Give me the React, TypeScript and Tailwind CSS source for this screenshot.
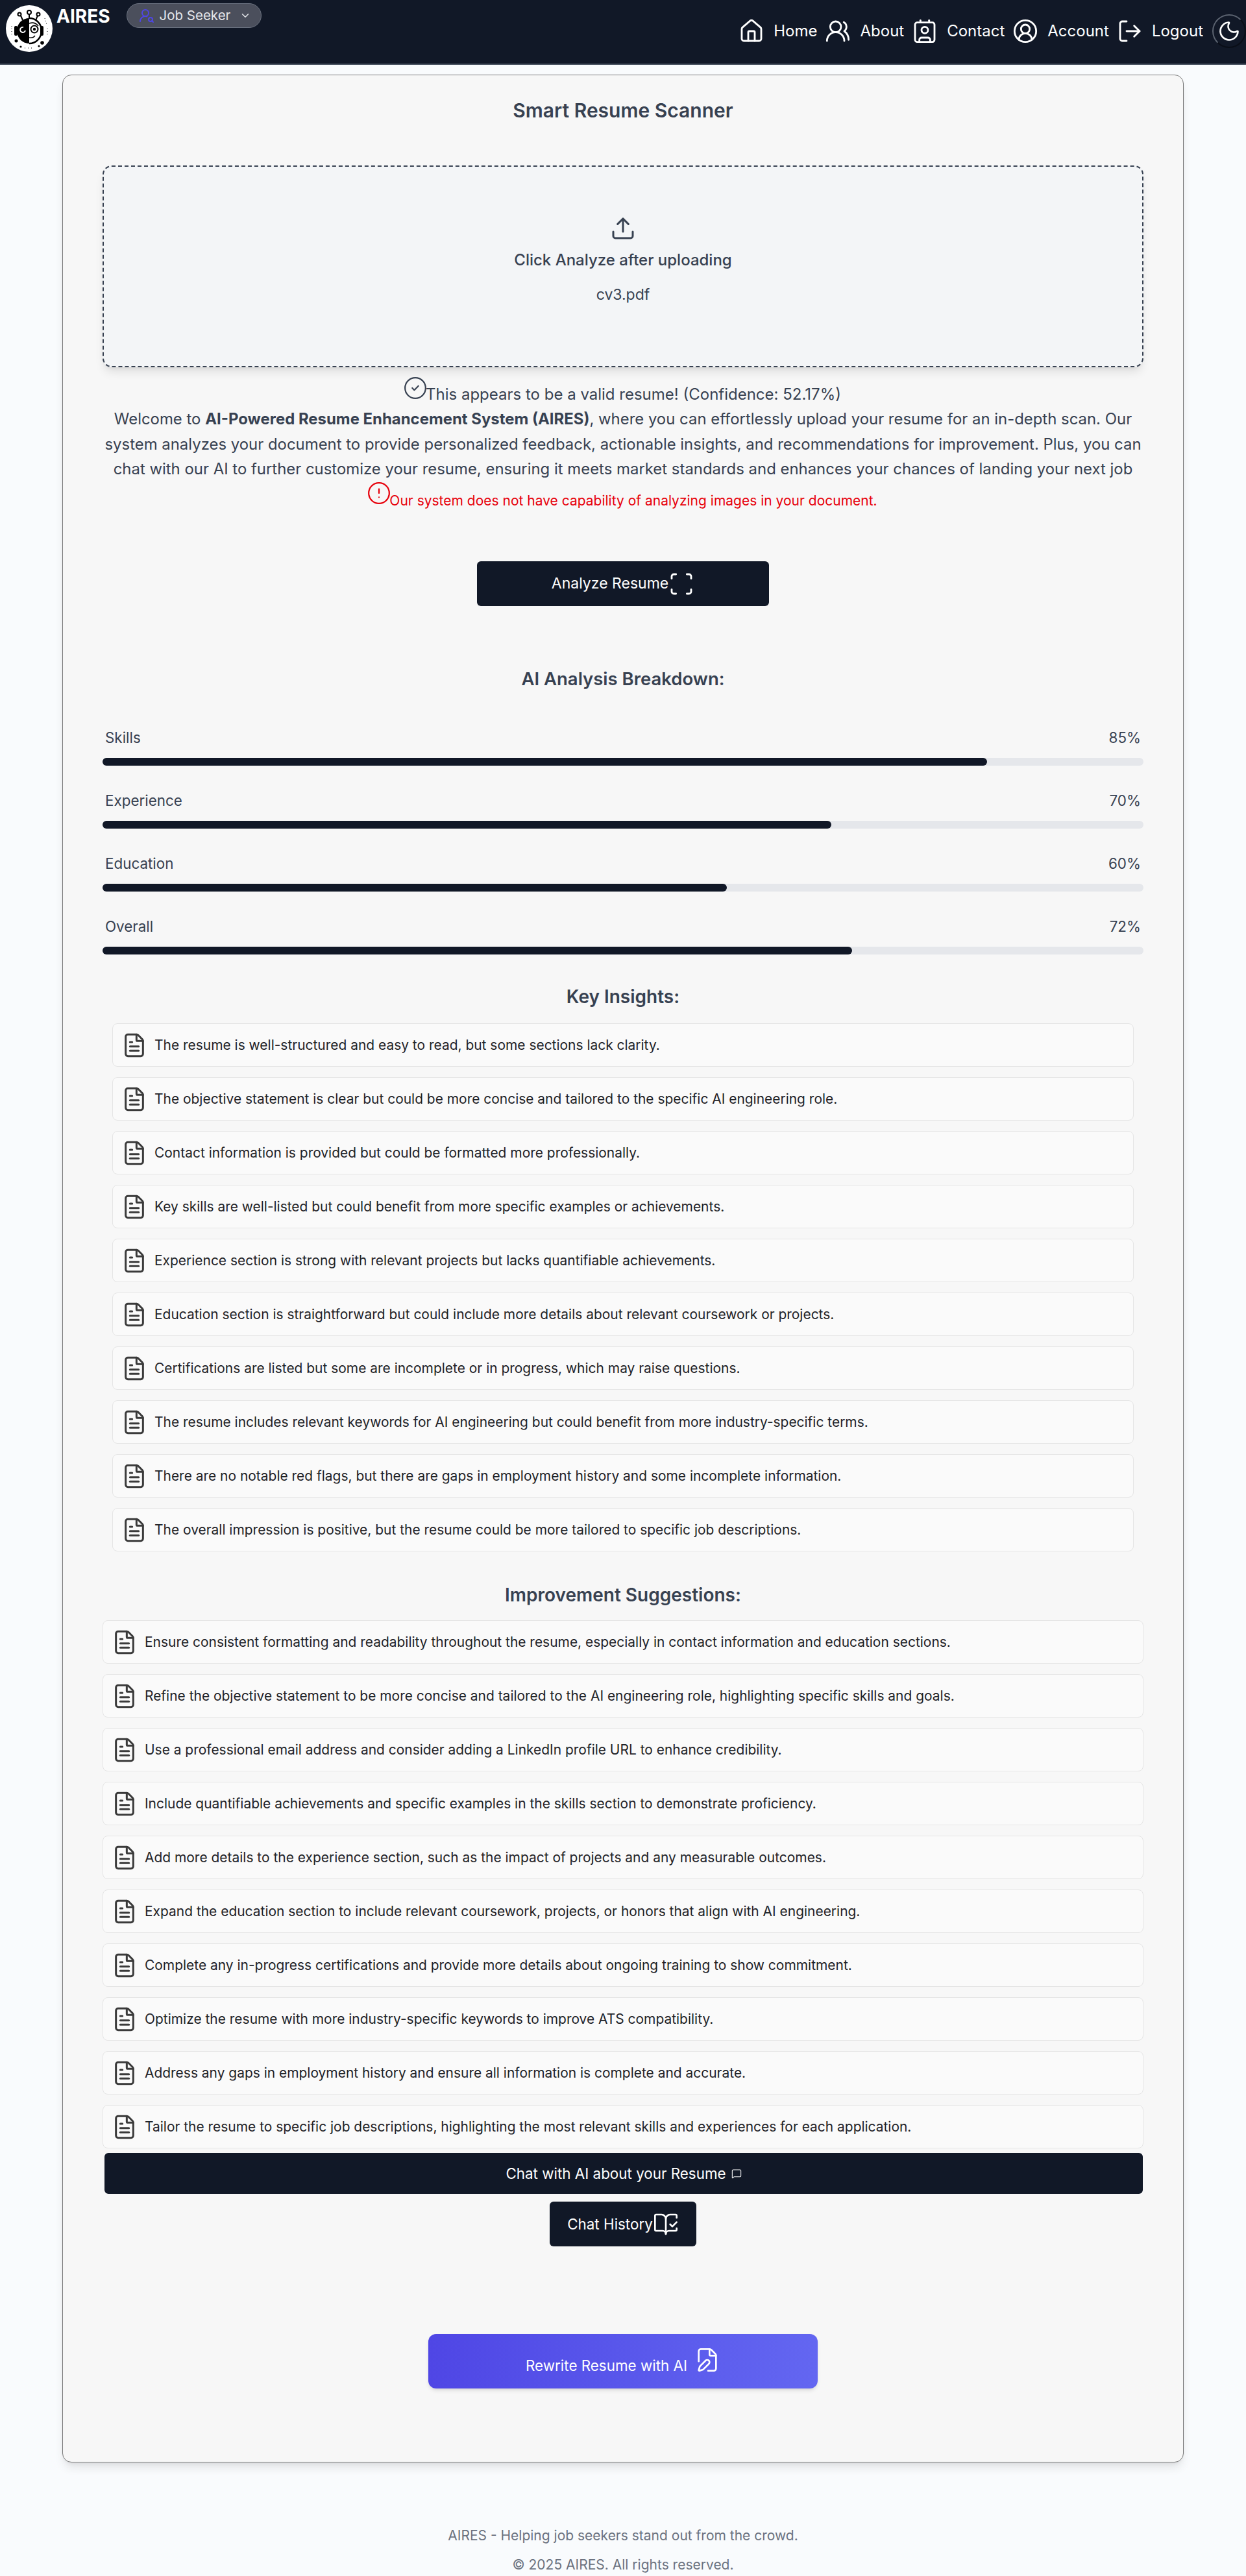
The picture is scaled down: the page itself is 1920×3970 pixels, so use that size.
import {
  BookOpenCheck,
  ChevronDown,
  CircleAlert,
  CircleCheck,
  CircleUserRound,
  Contact,
  FilePen,
  FileText,
  House,
  LogOut,
  MessageSquare,
  Moon,
  Scan,
  Upload,
  UserRoundSearch,
  UsersRound,
} from "lucide-react";

const scores = [
  { label: "Skills", value: 85 },
  { label: "Experience", value: 70 },
  { label: "Education", value: 60 },
  { label: "Overall", value: 72 },
];

const insights = [
  "The resume is well-structured and easy to read, but some sections lack clarity.",
  "The objective statement is clear but could be more concise and tailored to the specific AI engineering role.",
  "Contact information is provided but could be formatted more professionally.",
  "Key skills are well-listed but could benefit from more specific examples or achievements.",
  "Experience section is strong with relevant projects but lacks quantifiable achievements.",
  "Education section is straightforward but could include more details about relevant coursework or projects.",
  "Certifications are listed but some are incomplete or in progress, which may raise questions.",
  "The resume includes relevant keywords for AI engineering but could benefit from more industry-specific terms.",
  "There are no notable red flags, but there are gaps in employment history and some incomplete information.",
  "The overall impression is positive, but the resume could be more tailored to specific job descriptions.",
];

const suggestions = [
  "Ensure consistent formatting and readability throughout the resume, especially in contact information and education sections.",
  "Refine the objective statement to be more concise and tailored to the AI engineering role, highlighting specific skills and goals.",
  "Use a professional email address and consider adding a LinkedIn profile URL to enhance credibility.",
  "Include quantifiable achievements and specific examples in the skills section to demonstrate proficiency.",
  "Add more details to the experience section, such as the impact of projects and any measurable outcomes.",
  "Expand the education section to include relevant coursework, projects, or honors that align with AI engineering.",
  "Complete any in-progress certifications and provide more details about ongoing training to show commitment.",
  "Optimize the resume with more industry-specific keywords to improve ATS compatibility.",
  "Address any gaps in employment history and ensure all information is complete and accurate.",
  "Tailor the resume to specific job descriptions, highlighting the most relevant skills and experiences for each application.",
];

const navLinks = [
  { label: "Home", icon: House },
  { label: "About", icon: UsersRound },
  { label: "Contact", icon: Contact },
  { label: "Account", icon: CircleUserRound },
  { label: "Logout", icon: LogOut },
];

function Logo() {
  return (
    <svg viewBox="0 0 72 72" className="w-[72px] h-[72px] shrink-0">
      <circle cx="36" cy="36" r="36" fill="#fff" />
      {/* robot head, split black and white */}
      <path d="M36 20a19 19 0 0 0-19 19c0 11 8 20 19 20z" fill="#000" />
      <path d="M36 20a19 19 0 0 1 19 19c0 11-8 20-19 20" fill="#fff" stroke="#000" strokeWidth="2.5" />
      <path d="M36 20V11M26 23l-4-9M46 23l4-9" stroke="#000" strokeWidth="2" fill="none" />
      <circle cx="36" cy="11" r="3" fill="#fff" stroke="#000" strokeWidth="2" />
      <circle cx="21" cy="14" r="2.5" fill="#fff" stroke="#000" strokeWidth="2" />
      <circle cx="50" cy="14" r="2.5" fill="#fff" stroke="#000" strokeWidth="2" />
      <path d="M36 28c6-2 11 0 14 4" stroke="#000" strokeWidth="1.5" fill="none" />
      <circle cx="44" cy="37" r="5.5" fill="#fff" stroke="#000" strokeWidth="2" />
      <circle cx="44" cy="37" r="2.2" fill="#000" />
      <path d="M27 34a4 4 0 1 0 3 5" stroke="#fff" strokeWidth="2" fill="none" />
      <path d="M36 50q6 1 9-3" stroke="#000" strokeWidth="1.5" fill="none" />
      <rect x="13" y="32" width="5" height="15" rx="2" fill="#000" />
      <rect x="53" y="32" width="5" height="15" rx="2" fill="#000" />
      <circle cx="16" cy="55" r="2.5" fill="#000" />
      <circle cx="56" cy="58" r="2.8" fill="#000" />
      <circle cx="23" cy="64" r="1.6" fill="#000" />
      <circle cx="51" cy="63" r="1.6" fill="#000" />
      <path d="M9 32v14M60 20l3 10M64 36v10" stroke="#000" strokeWidth="1" strokeDasharray="1 3" fill="none" />
      <path d="M29 66h13" stroke="#000" strokeWidth="1" strokeDasharray="1 4" fill="none" />
    </svg>
  );
}

function FeedbackRow({ text }: { text: string }) {
  return (
    <li className="flex items-center gap-[11px] h-[67px] pl-[13px] bg-[#fafafa] border border-[#e5e5e5] rounded-[8px] text-[20.95px] text-[#1f2328]">
      <FileText size={40} strokeWidth={1.8} className="shrink-0 text-[#3a3a3a]" />
      <span>{text}</span>
    </li>
  );
}

export default function App() {
  return (
    <div className="h-[3970px] overflow-hidden bg-[#f9fbfd] font-['Inter',sans-serif]">
      <header className="flex justify-between h-[100px] bg-[#111827] border-b-2 border-[#4b5563] text-white">
        <div className="flex items-start pl-[9px] pt-[8px]">
          <Logo />
          <span className="ml-[6px] text-[28px] leading-[34px] font-bold">AIRES</span>
          <div className="flex items-center ml-[25px] -mt-[3px] w-[208px] h-[38px] pl-[18px] bg-[#4b4f5c] border border-[#6b7280] rounded-full text-[20.5px] text-[#e5e7eb]">
            <UserRoundSearch size={24} className="text-[#4f46e5]" />
            <span className="ml-[8px]">Job Seeker</span>
            <ChevronDown size={18} className="ml-[14px]" />
          </div>
        </div>
        <nav className="flex items-center pb-[2px]">
          {navLinks.map(({ label, icon: Icon }) => (
            <div key={label} className="flex items-center gap-[14px] mr-[12px] text-[24px]">
              <Icon size={40} strokeWidth={1.7} />
              <span>{label}</span>
            </div>
          ))}
          <div className="flex items-center justify-center ml-[2px] w-[52px] h-[52px] rounded-full border-2 border-t-[#5b6370] border-l-[#5b6370] border-r-[#0a0e17] border-b-[#0a0e17]">
            <Moon size={36} strokeWidth={1.8} className="shrink-0" />
          </div>
        </nav>
      </header>

      <main className="pt-[15px]">
        <section className="mx-auto w-[1728px] h-[3680px] px-[61px] pt-[36px] bg-[#f7f7f7] border border-[#777] rounded-[14px] shadow-lg">
          <h1 className="text-center text-[30px] leading-[36px] font-semibold text-[#374151]">Smart Resume Scanner</h1>

          <div className="flex flex-col items-center mt-[67px] h-[311px] pt-[75px] bg-[#f3f5f7] border-2 border-dashed border-[#374151] rounded-[14px] shadow-lg text-[#374151]">
            <Upload size={40} strokeWidth={1.8} />
            <p className="mt-[11px] text-[24px] leading-[36px] font-medium">Click Analyze after uploading</p>
            <p className="mt-[20px] text-[23px] leading-[30px]">cv3.pdf</p>
          </div>

          <div className="text-center text-[#374151]">
            <p className="flex justify-center items-start mt-[13px] h-[44px] text-[24px] leading-[30px]">
              <CircleCheck size={38} strokeWidth={1.4} className="-mx-[3px]" />
              <span className="mt-[14px]">This appears to be a valid resume! (Confidence: 52.17%)</span>
            </p>
            <p className="mt-[4px] text-[23.92px] leading-[38.5px]">
              Welcome to <strong className="font-bold">AI-Powered Resume Enhancement System (AIRES)</strong>, where you can effortlessly upload your resume for an in-depth scan. Our system analyzes your document to provide personalized feedback, actionable insights, and recommendations for improvement. Plus, you can chat with our AI to further customize your resume, ensuring it meets market standards and enhances your chances of landing your next job
            </p>
            <p className="flex justify-center items-start h-[44.5px] text-[21px] leading-[30px] text-[#e7000b]">
              <CircleAlert size={38} strokeWidth={1.4} className="-mx-[3px] -mt-[2px]" />
              <span className="mt-[14.5px]">Our system does not have capability of analyzing images in your document.</span>
            </p>
          </div>

          <div className="flex justify-center mt-[78px]">
            <button className="flex items-center justify-center w-[450px] h-[69px] bg-[#111827] rounded-[6px] text-[23px] text-white">
              Analyze Resume
              <Scan size={40} strokeWidth={1.7} />
            </button>
          </div>

          <h2 className="mt-[94px] text-center text-[27.5px] leading-[36px] font-semibold text-[#374151]">AI Analysis Breakdown:</h2>

          <div className="mt-[57px] flex flex-col gap-[38px]">
            {scores.map((s) => (
              <div key={s.label}>
                <div className="flex justify-between px-[4px] text-[22.4px] leading-[32px] text-[#374151]">
                  <span>{s.label}</span>
                  <span>{s.value}%</span>
                </div>
                <div className="mt-[15px] h-[12px] bg-[#e5e7eb] rounded-full">
                  <div className="h-full bg-[#111827] rounded-full" style={{ width: `${s.value}%` }} />
                </div>
              </div>
            ))}
          </div>

          <h2 className="mt-[47px] text-center text-[28px] leading-[36px] font-semibold text-[#374151]">Key Insights:</h2>
          <ul className="mt-[23px] mx-[15px] flex flex-col gap-[16px]">
            {insights.map((t) => (
              <FeedbackRow key={t} text={t} />
            ))}
          </ul>

          <h2 className="mt-[49px] text-center text-[28px] leading-[36px] font-semibold text-[#374151]">Improvement Suggestions:</h2>
          <ul className="mt-[21px] flex flex-col gap-[16px]">
            {suggestions.map((t) => (
              <FeedbackRow key={t} text={t} />
            ))}
          </ul>

          <button className="flex items-center justify-center gap-[8px] mt-[7px] mx-[3px] w-[1600px] h-[63px] bg-[#111827] rounded-[6px] text-[22.4px] text-white">
            Chat with AI about your Resume
            <MessageSquare size={16} strokeWidth={1.6} />
          </button>
          <div className="flex justify-center mt-[12px]">
            <button className="flex items-center justify-center w-[226px] h-[69px] bg-[#111827] rounded-[6px] text-[22.4px] text-white">
              Chat History
              <BookOpenCheck size={40} strokeWidth={1.6} />
            </button>
          </div>
          <div className="flex justify-center mt-[135px]">
            <button className="flex items-center justify-center gap-[11px] w-[600px] h-[84px] bg-gradient-to-r from-[#4f46e5] to-[#6366f1] rounded-[12px] shadow-md text-[22.4px] text-white">
              <span className="mt-[14px]">Rewrite Resume with AI</span>
              <FilePen size={40} strokeWidth={1.6} className="-mt-[4px]" />
            </button>
          </div>
        </section>
      </main>

      <footer className="mt-[90px] text-center text-[21px] leading-[45px] text-[#6b7280]">
        <p>AIRES - Helping job seekers stand out from the crowd.</p>
        <p>© 2025 AIRES. All rights reserved.</p>
      </footer>
    </div>
  );
}
